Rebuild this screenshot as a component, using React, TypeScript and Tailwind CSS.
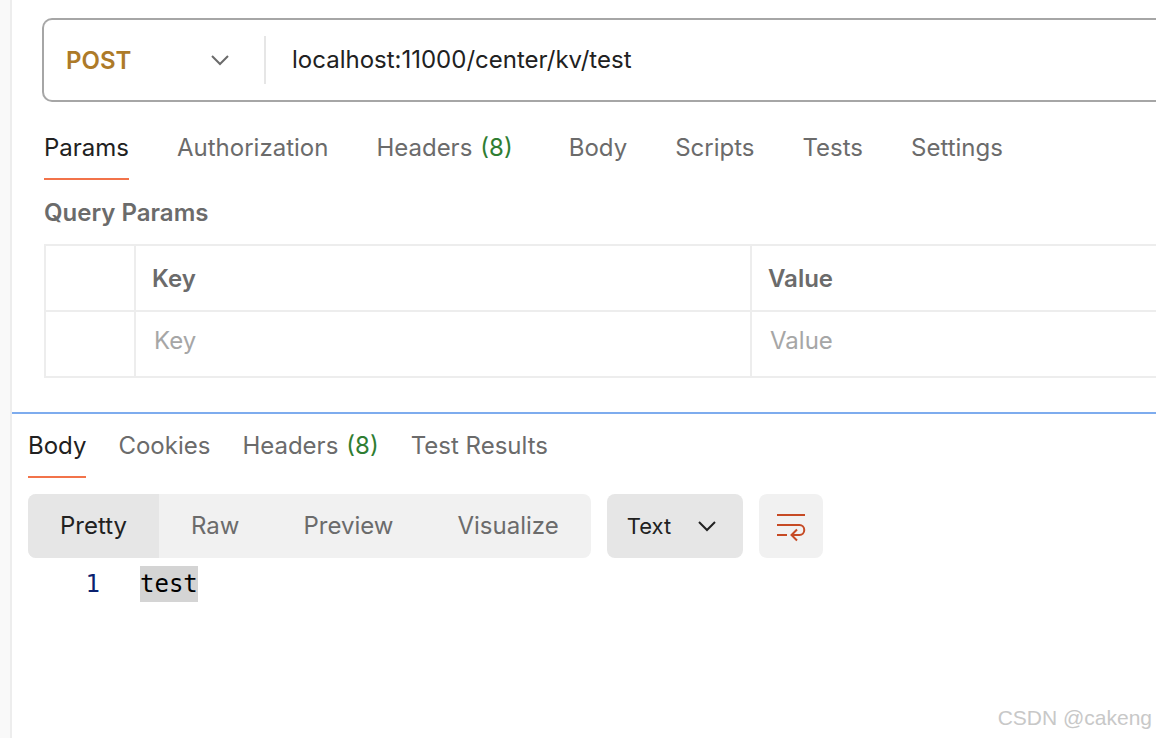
import { useState } from 'react';

type Tab = { label: string; count?: number; dot?: boolean };

const REQUEST_TABS: Tab[] = [
  { label: 'Params' },
  { label: 'Authorization' },
  { label: 'Headers', count: 8, dot: true },
  { label: 'Body' },
  { label: 'Scripts' },
  { label: 'Tests' },
  { label: 'Settings' },
];

const RESPONSE_TABS: Tab[] = [
  { label: 'Body' },
  { label: 'Cookies' },
  { label: 'Headers', count: 8 },
  { label: 'Test Results' },
];

const VIEWS = ['Pretty', 'Raw', 'Preview', 'Visualize'];

function Chevron({ className }: { className: string }) {
  return (
    <svg viewBox="0 0 20 12" className={`pointer-events-none absolute h-3 w-5 ${className}`} fill="none" stroke="currentColor" strokeWidth="2">
      <path d="M2 2 10 10 18 2" />
    </svg>
  );
}

function Tabs({ tabs, className }: { tabs: Tab[]; className: string }) {
  const [active, setActive] = useState(tabs[0].label);
  return (
    <nav className={`flex ${className}`}>
      {tabs.map(t => (
        <button
          key={t.label}
          onClick={() => setActive(t.label)}
          className={`border-b-2 whitespace-nowrap ${t.dot ? 'mr-2' : ''} ${active === t.label ? 'border-[#f2734a] text-[#212121]' : 'border-transparent text-[#6b6b6b]'}`}
        >
          {t.label}
          {t.count && <span className="ml-2 text-[#2f7d32]">({t.count})</span>}
        </button>
      ))}
    </nav>
  );
}

export default function App() {
  const [view, setView] = useState('Pretty');

  return (
    <div className="relative flex min-h-screen overflow-hidden bg-white font-['Inter',sans-serif] text-2xl leading-8 text-[#212121]">
      <aside className="w-3 shrink-0 border-r-2 border-[#ededed] bg-[#f9f9f9]" />

      <main className="min-w-0 flex-1">
        <section className="border-b-2 border-[#7eacee] pt-[18px] pb-[34px] pl-8">
          {/* Request line */}
          <div className="-ml-0.5 flex h-[84px] items-center rounded-l-[10px] border-2 border-r-0 border-[#a6a6a6]">
            <div className="relative flex h-12 w-[222px] shrink-0 items-center border-r-2 border-[#e6e6e6]">
              <select aria-label="Method" className="h-full w-full appearance-none bg-transparent pt-0.5 pl-[22px] font-semibold text-[#ad7a28] outline-none">
                <option>POST</option>
                <option>GET</option>
              </select>
              <Chevron className="right-[34px] text-[#6b6b6b]" />
            </div>
            <input
              aria-label="Request URL"
              defaultValue="localhost:11000/center/kv/test"
              className="min-w-0 flex-1 bg-transparent px-[26px] outline-none"
            />
          </div>

          <Tabs tabs={REQUEST_TABS} className="h-[78px] gap-12 pt-4" />

          <h2 className="pt-[17px] pb-[15px] font-semibold text-[#6b6b6b]">Query Params</h2>
          <table className="w-full table-fixed border-collapse text-left text-[#6b6b6b]">
            <colgroup>
              <col className="w-[90px]" />
              <col className="w-[616px]" />
              <col />
            </colgroup>
            <thead>
              <tr className="h-[66px]">
                <th className="border-2 border-[#ededed]" />
                <th className="border-2 border-[#ededed] px-4 pt-0.5 font-semibold">Key</th>
                <th className="border-2 border-r-0 border-[#ededed] px-4 pt-0.5 font-semibold">Value</th>
              </tr>
            </thead>
            <tbody>
              <tr className="h-[66px]">
                <td className="border-2 border-[#ededed]" />
                <td className="border-2 border-[#ededed] px-[18px] pb-1.5">
                  <input aria-label="Key" placeholder="Key" className="block w-full outline-none placeholder:text-[#a6a6a6]" />
                </td>
                <td className="border-2 border-r-0 border-[#ededed] px-[18px] pb-1.5">
                  <input aria-label="Value" placeholder="Value" className="block w-full outline-none placeholder:text-[#a6a6a6]" />
                </td>
              </tr>
            </tbody>
          </table>
        </section>

        <section className="px-4">
          <Tabs tabs={RESPONSE_TABS} className="h-16 gap-8 pt-0.5" />

          <div className="mt-4 flex h-16 gap-4">
            <div className="flex overflow-hidden rounded-lg bg-[#f1f1f1]">
              {VIEWS.map(v => (
                <button
                  key={v}
                  onClick={() => setView(v)}
                  className={`px-8 ${view === v ? 'bg-[#e6e6e6] text-[#212121]' : 'text-[#6b6b6b]'}`}
                >
                  {v}
                </button>
              ))}
            </div>
            <div className="relative flex w-[136px] items-center rounded-lg bg-[#e6e6e6]">
              <select aria-label="Format" className="h-full w-full appearance-none bg-transparent pl-5 text-[22px] outline-none">
                <option>Text</option>
                <option>JSON</option>
              </select>
              <Chevron className="right-[26px]" />
            </div>
            <button aria-label="Wrap lines" className="flex w-16 items-center justify-center rounded-lg bg-[#f1f1f1] text-[#c64a24]">
              <svg viewBox="0 0 32 32" className="size-8" fill="none" stroke="currentColor" strokeWidth="2">
                <path d="M2 5h28M2 15h22.5a4.75 5 0 0 1 0 10H17M2 25h10M22 19.5 16.5 25l5.5 5.5" />
              </svg>
            </button>
          </div>

          {/* Response body */}
          <div className="mt-2 flex font-['DejaVu_Sans_Mono',monospace] leading-9">
            <span className="w-[72px] text-right text-[#0b216f]">1</span>
            <code className="ml-10 bg-[#d4d4d4] font-['DejaVu_Sans_Mono',monospace] text-black">test</code>
          </div>
        </section>
      </main>

      <span className="absolute right-1 bottom-1 font-['Liberation_Sans',sans-serif] text-[21px] text-[#c8c8c8]">CSDN @cakeng</span>
    </div>
  );
}
